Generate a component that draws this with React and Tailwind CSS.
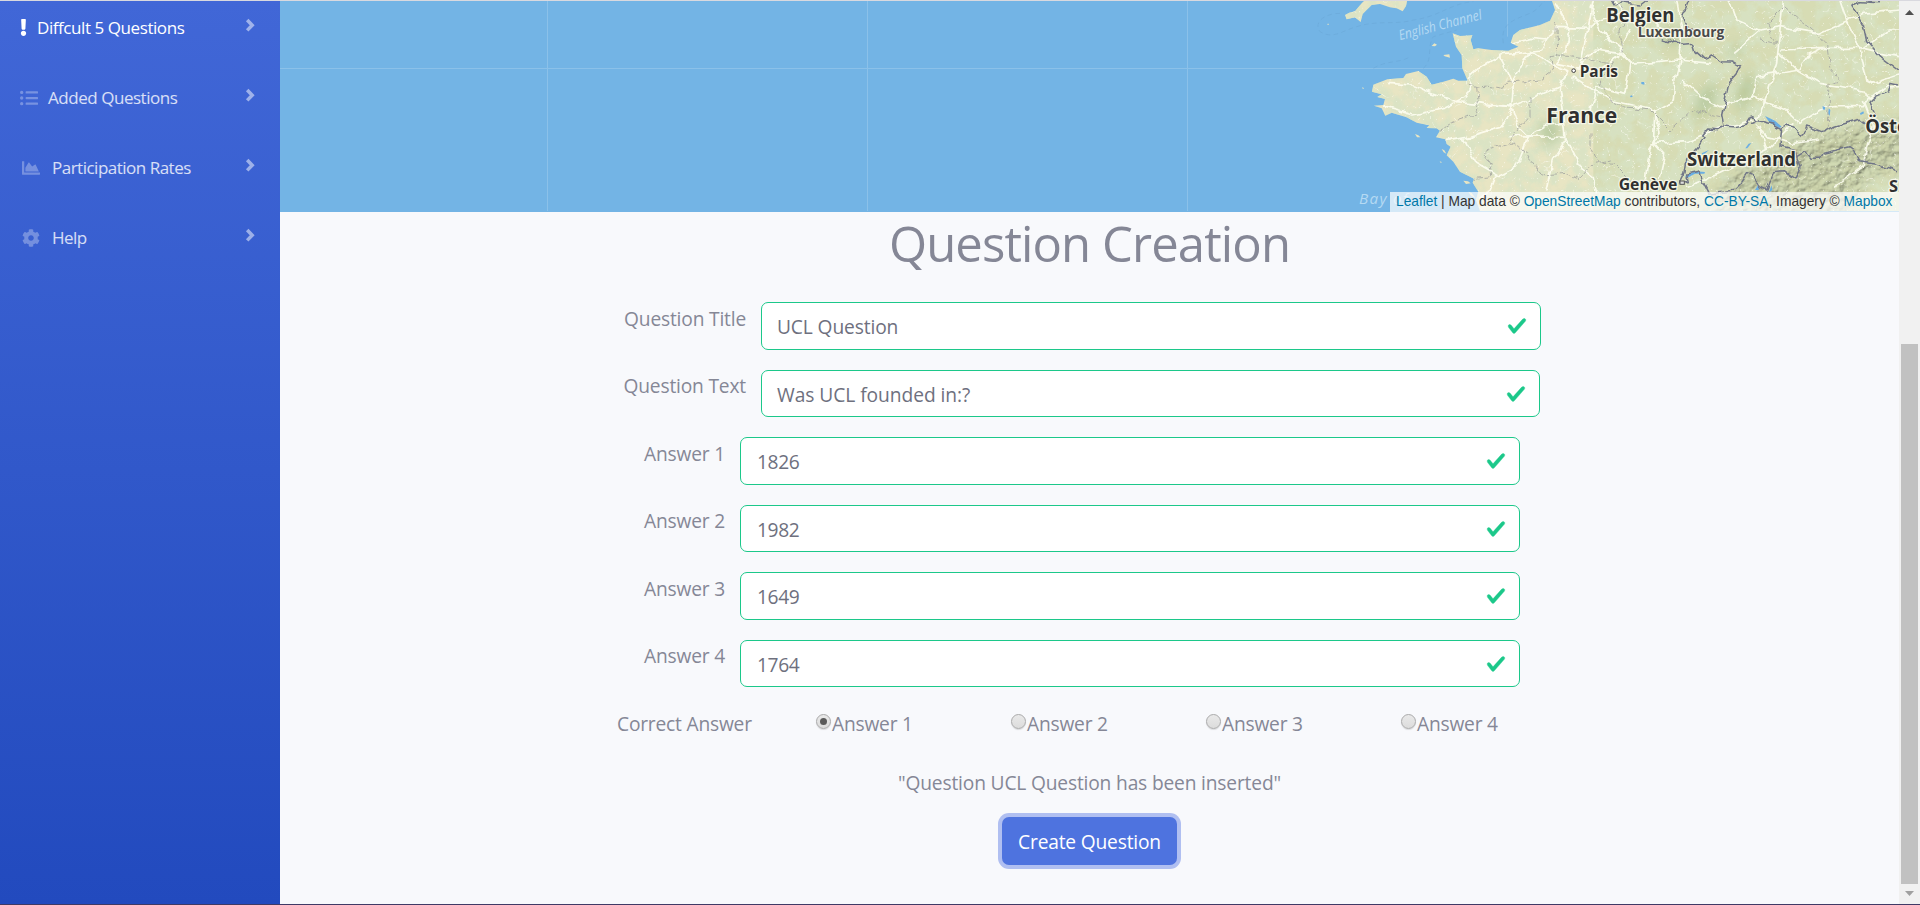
import React from 'react';
import { FaExclamation, FaListUl, FaChartArea, FaCog } from 'react-icons/fa';

const NAV = [
  { label: 'Diffcult 5 Questions', Icon: FaExclamation, icon: 'text-white text-[17px] w-[7px]', text: 'text-white ml-[10px] tracking-[-0.43px]' },
  { label: 'Added Questions', Icon: FaListUl, icon: 'text-white/30 text-[18px] w-[18px]', text: 'text-white/80 ml-[10px] tracking-[-0.46px]' },
  { label: 'Participation Rates', Icon: FaChartArea, icon: 'text-white/30 text-[18px] w-[18px] ml-[2px]', text: 'text-white/80 ml-[12px] tracking-[-0.5px]' },
  { label: 'Help', Icon: FaCog, icon: 'text-white/30 text-[18px] w-[18px] ml-[2px]', text: 'text-white/80 ml-[12px] tracking-[-0.5px]' },
];

function Sidebar() {
  return (
    <nav className="w-[280px] shrink-0 bg-gradient-to-b from-[#4167d7] to-[#224abe]">
      {NAV.map(({ label, Icon, icon, text }) => (
        <a key={label} className="flex h-[70px] items-start pl-[20px] pr-[24px]">
          <Icon className={`mt-[18px] shrink-0 ${icon}`} />
          <span className={`mt-[14px] flex-1 whitespace-nowrap text-[17px] leading-[26px] ${text}`}>{label}</span>
          <svg viewBox="0 0 12 14" className="mt-[17px] h-[14px] w-[12px] shrink-0">
            <path d="M3.2 2L8.2 7.2 3.2 12.4" fill="none" stroke="white" strokeOpacity="0.5" strokeWidth="3.5" />
          </svg>
        </a>
      ))}
    </nav>
  );
}

const LAND =
  'M755 0L765 30 750 62 720 75 660 90 640 105 632 128 655 140 625 152 575 150 535 145 520 148 512 120 517 106 480 108 458 100 468 140 485 165 487 205 503 242 475 242 460 236 430 245 395 254 380 230 355 213 318 222 310 234 262 238 220 254 216 275 245 283 232 291 255 297 250 315 222 317 245 325 256 347 275 338 320 352 350 368 388 376 380 384 410 385 420 392 408 412 436 418 440 432 452 440 440 466 460 485 480 515 522 536 518 548 535 575 528 600 540 633 1797 633 1797 0Z';
const ENGLAND = 'M135 45L148 38 165 34 185 10 195 0 322 0 318 18 308 34 290 25 270 22 240 12 215 15 188 42 182 66 165 52 140 58Z';

const ROADS = [
  'M634 130L690 115 740 120 775 82 860 85 900 60 960 40',
  'M740 120L725 150 650 160 600 165 530 210 505 235 515 260 500 290 470 305',
  'M690 150L740 185 800 215 780 260 700 295 640 320 560 315 535 310 470 305 400 280 340 255 262 250',
  'M595 160L640 250 635 320 655 380 683 408 670 450 650 500 590 530 575 570 540 600',
  'M640 320L600 382 500 412 435 425',
  'M635 320L560 312',
  'M490 415L530 490 600 530',
  'M683 408L740 375 790 370',
  'M625 410L798 412 790 330 780 265 800 215',
  'M798 420L760 480 740 575',
  'M798 415L840 500 880 530 890 580',
  'M470 305L430 325 340 345 250 320',
  'M690 150L655 215 635 250',
  'M820 230L880 270 930 300 1060 330 1080 400 1050 440 1030 580',
  'M765 10L810 85 800 150 770 190 840 205 850 150 865 80 880 0',
  'M830 210L880 150 960 160 990 190 1060 185 1140 180 1230 190',
  'M840 215L900 210 960 165 970 150 900 90 870 20',
  'M870 330L890 260 975 280 990 190 960 150 990 90',
  'M1065 330L1060 430 1095 470 1080 540',
  'M1060 335L1120 300 1125 240 1140 180 1145 90 1130 0',
  'M1145 240L1200 290 1260 320 1360 290',
  'M1060 430L1160 425 1240 390 1280 380 1360 360',
  'M940 0L990 60 1050 50 1140 130',
  'M1365 370L1400 290 1430 190 1440 90 1450 0',
  'M1435 160L1490 210 1560 250 1690 270 1710 300 1760 260 1797 260',
  'M1460 330L1360 290 1370 230 1500 210 1520 170 1580 140',
  'M1440 150L1580 145 1680 145 1740 160 1797 170',
  'M1680 145L1640 60 1620 0',
  'M1680 145L1700 240 1720 250 1810 220',
  'M1690 145L1770 90 1797 90',
  'M1460 330L1500 370 1560 330 1600 320 1690 320 1710 290',
  'M1300 160L1380 90 1440 80 1560 100 1690 40 1797 30',
  'M1290 0L1310 60 1380 90',
  'M1365 375L1400 410 1480 430 1560 420',
  'M1380 380L1400 450 1340 480 1260 520 1160 560',
  'M1690 300L1720 380 1700 440 1690 500 1600 560',
  'M1480 370L1440 410 1400 450',
];
const REGIONS = [
  'M503 255L530 262 560 258 610 265 620 250 720 240 760 210 750 170 775 165 820 172 890 180 940 190',
  'M530 262L535 310 525 345 450 370 415 392',
  'M690 290L690 350 660 380 625 430 670 450 690 480 725 525 800 520 840 535 880 490 930 480',
  'M625 430L550 455 570 490 575 530 520 535',
  'M770 165L768 80 760 60',
  'M870 400L870 440 890 485 940 490 990 540 1050 590',
  'M940 190L900 250 930 300 970 320 1050 330 1110 390 1180 330 1260 350',
  'M970 160L960 90 985 60 960 20',
  'M1380 120L1430 130 1400 70 1450 20 1500 60 1540 90 1580 130 1590 210 1615 240 1590 250 1585 380',
];
const BORDERS = [
  'M1085 122L1105 128 1125 120 1150 133 1180 130 1188 155 1210 175 1235 165 1265 185 1300 186 1322 198 1305 225 1288 245 1275 300 1265 345 1272 378 1300 380 1340 372 1350 355 1365 350 1368 362 1355 370 1375 362 1420 372 1445 385 1460 375 1480 385 1500 412 1512 400 1520 378 1565 395 1610 378 1680 358 1700 375 1728 345 1710 310 1730 290 1765 275 1773 250 1797 255',
  'M1272 378L1250 392 1220 390 1208 405 1215 412 1190 445 1160 480 1155 515 1140 545 1165 545 1160 525 1200 515 1210 550 1225 580',
  'M1445 385L1440 440 1480 450 1490 470 1515 455 1530 475 1560 475 1570 460 1650 440 1665 450 1680 485 1740 495 1797 512',
  'M1490 470L1500 500 1485 540 1450 515 1420 518 1400 570 1380 560 1360 530 1340 520 1320 550 1300 570 1225 580',
  'M1655 18L1670 40 1690 75 1700 125 1740 170 1797 213',
  'M1655 18L1680 5 1740 8',
  'M1170 0L1160 25 1145 40 1155 75 1180 95',
  'M935 0L945 18 960 8 1020 15 1040 0',
];

const LABELS = [
  { t: 'Belgien', x: 919, y: 65, w: 204, s: 57 },
  { t: 'Luxembourg', x: 1013, y: 110, w: 260, s: 44, c: '#4a4a4a' },
  { t: 'Paris', x: 839, y: 231, w: 115, s: 50 },
  { t: 'France', x: 739, y: 368, w: 213, s: 65 },
  { t: 'Switzerland', x: 1161, y: 497, w: 327, s: 56 },
  { t: 'Genève', x: 956, y: 570, w: 176, s: 50 },
  { t: 'Öste', x: 1696, y: 399, w: 128, s: 58 },
  { t: 'S', x: 1767, y: 577, w: 27, s: 48 },
];

function MapArt() {
  return (
    <svg className="block h-[210px] w-[1619px]" viewBox="-3060 3 4857 630" preserveAspectRatio="none" aria-hidden="true">
      <defs>
        <clipPath id="land"><path d={LAND} /><path d={ENGLAND} /></clipPath>
        <filter id="terrain" x="0" y="0" width="100%" height="100%">
          <feTurbulence type="fractalNoise" baseFrequency="0.022" numOctaves="4" seed="4" />
          <feColorMatrix values="0 0 0 0 0.68  0 0 0 0 0.77  0 0 0 0 0.56  3.6 0 0 0 -1.3" />
        </filter>
        <filter id="lanes" x="0" y="0" width="100%" height="100%">
          <feTurbulence type="turbulence" baseFrequency="0.028" numOctaves="2" seed="9" />
          <feColorMatrix values="0 0 0 0 1  0 0 0 0 1  0 0 0 0 0.93  -14 0 0 0 1" />
        </filter>
        <filter id="relief" x="0" y="0" width="100%" height="100%">
          <feTurbulence type="fractalNoise" baseFrequency="0.04 0.05" numOctaves="4" seed="2" result="n" />
          <feColorMatrix in="n" values="1 0 0 0 0  0 1 0 0 0  0 0 1 0 0  1 0 0 0 0" result="h" />
          <feDiffuseLighting in="h" surfaceScale="9" lightingColor="#d0d8ae"><feDistantLight azimuth="225" elevation="50" /></feDiffuseLighting>
        </filter>
        <filter id="soft" x="-30%" y="-30%" width="160%" height="160%"><feGaussianBlur stdDeviation="18" /></filter>
        <filter id="rough" x="-5%" y="-5%" width="110%" height="110%">
          <feTurbulence type="fractalNoise" baseFrequency="0.03" numOctaves="2" seed="7" />
          <feDisplacementMap in="SourceGraphic" scale="22" xChannelSelector="R" yChannelSelector="G" />
        </filter>
        <mask id="alps"><path d="M1210 650L1300 520 1400 480 1500 410 1600 400 1720 370 1830 360 1830 500 1700 530 1640 650Z" fill="white" filter="url(#soft)" /></mask>
      </defs>
      <rect x="-3060" width="4857" height="633" fill="#73b4e5" />
      <g stroke="#9bcaec" strokeWidth="3" opacity="0.6">
        <path d="M-3060 205.5H620M-2257.5 0V633M-1297.5 0V633M-337.5 0V633M622.5 0V110" />
      </g>
      <g fill="none" stroke="#68a5d3" strokeWidth="2" strokeDasharray="14 10" opacity="0.7">
        <path d="M120 40C70 40 40 70 60 95C100 120 130 90 170 80C230 60 290 75 340 60C420 50 450 10 520 5" />
        <path d="M610 130C600 70 640 60 690 40C730 20 720 5 740 0M370 205C400 180 380 140 400 110L470 90M220 205C260 180 300 190 330 170" />
      </g>
      <path d={LAND} fill="#e8e5c3" />
      <path d={ENGLAND} fill="#e8e5c3" />
      <path d="M395 138l8-8 8 4-6 5zM430 165l18-2 2 10-16-4zM345 402l10 4 6 6-10 0zM490 542l14 2 8 6-14 2zM425 447l8 4 6 10-8-4zM505 575l10 4 12 16-14-8zM419 484l6 2-2 4zM84 70l3 4-5 1zM186 262l6 2-3 4z" fill="#e8e5c3" />
      <g clipPath="url(#land)">
        <rect x="880" width="920" height="633" fill="#c6d4a6" opacity="0.5" />
        <rect x="130" width="1670" height="633" filter="url(#terrain)" opacity="0.8" />
        <g fill="#a3b987" opacity="0.6" filter="url(#soft)">
          <path d="M1310 280L1350 210 1365 260 1320 350ZM1200 280L1250 240 1240 320 1180 370ZM1280 170L1310 130 1330 160ZM720 370L780 360 780 410 730 440ZM1080 90h70v40h-60z" />
        </g>
        <rect x="1180" y="340" width="620" height="293" filter="url(#relief)" mask="url(#alps)" opacity="0.65" />
        <rect x="130" width="1670" height="633" filter="url(#lanes)" opacity="0.5" />
        <g fill="none" stroke="#fffff4" strokeWidth="5" strokeLinejoin="round" opacity="0.85" filter="url(#rough)">
          {ROADS.map((d) => <path key={d} d={d} />)}
        </g>
        <g fill="none" stroke="#a3a5a0" strokeWidth="2.5" strokeDasharray="16 5" filter="url(#rough)">
          {REGIONS.map((d) => <path key={d} d={d} />)}
        </g>
        <path fill="#6aaee3" d="M1155 528l30-14 30 2-2 5-28 0-25 14zM1395 348l30 14 20 18-6 4-30-16zM1568 318l8 4-2 8-6-2zM1586 325l5 5-2 18-4-8zM1680 340l10-6 2 6-10 5zM1205 460l22-10-18 16zM1336 445l10-14 8-2-12 16zM1024 246l9 0 0 8-9-2zM990 288l6-2 2 5-6 1zM1365 570l10-16 2 16zM1405 580l10-24 2 14z" />
        <g fill="none" stroke="#707587" strokeWidth="4.5" strokeLinejoin="round" filter="url(#rough)">
          {BORDERS.map((d) => <path key={d} d={d} />)}
        </g>
      </g>
      <g fontFamily="'Open Sans','Noto Sans',sans-serif">
        <g fill="#b5daf3" fontStyle="italic">
          <text x="300" y="121" fontSize="42" textLength="256" lengthAdjust="spacingAndGlyphs" transform="rotate(-14.5 300 121)">English Channel</text>
          <text x="177" y="613" fontSize="46" textLength="146">Bay of</text>
        </g>
        <g fontWeight="700" stroke="#fbfbf0" strokeOpacity="0.85" strokeWidth="8" strokeLinejoin="round" paintOrder="stroke">
          {LABELS.map((l) => (
            <text key={l.t} x={l.x} y={l.y} fontSize={l.s} textLength={l.w} lengthAdjust="spacingAndGlyphs" fill={l.c || '#303030'}>{l.t}</text>
          ))}
        </g>
      </g>
      <circle cx="821" cy="212" r="5.5" fill="#fff" stroke="#444" strokeWidth="3" />
      <rect x="1140" y="543" width="13" height="10" fill="#ddd" stroke="#555" strokeWidth="3" />
    </svg>
  );
}

function MapPanel() {
  return (
    <div className="relative h-[211px] shrink-0 overflow-hidden bg-[#73b4e5]">
      <MapArt />
      <div className="absolute bottom-0 right-0 h-[20px] w-[509px] whitespace-nowrap bg-white/70 pl-[6px] font-['Liberation_Sans',sans-serif] text-[13.75px] leading-[19px] text-[#333]">
        <a className="text-[#0078a8]">Leaflet</a> | Map data © <a className="text-[#0078a8]">OpenStreetMap</a> contributors, <a className="text-[#0078a8]">CC-BY-SA</a>, Imagery © <a className="text-[#0078a8]">Mapbox</a>
      </div>
    </div>
  );
}

const FIELDS = [
  { label: 'Question Title', value: 'UCL Question', col: 'w-[466px]', box: 'w-[780px] pl-[15px]', vt: 'tracking-[-0.12px]' },
  { label: 'Question Text', value: 'Was UCL founded in:?', col: 'w-[466px]', box: 'w-[779px] pl-[15px]', vt: 'tracking-[-0.05px]' },
  { label: 'Answer 1', value: '1826', col: 'w-[445px]', box: 'w-[780px] pl-[16px]', vt: 'tracking-[-0.4px]' },
  { label: 'Answer 2', value: '1982', col: 'w-[445px]', box: 'w-[780px] pl-[16px]', vt: 'tracking-[-0.4px]' },
  { label: 'Answer 3', value: '1649', col: 'w-[445px]', box: 'w-[780px] pl-[16px]', vt: 'tracking-[-0.4px]' },
  { label: 'Answer 4', value: '1764', col: 'w-[445px]', box: 'w-[780px] pl-[16px]', vt: 'tracking-[-0.4px]' },
];

function Field({ label, value, col, box, vt }) {
  return (
    <div className="flex h-[47.5px] items-start gap-[15px]">
      <label className={`shrink-0 whitespace-nowrap pt-[2.6px] text-right text-[19.2px] leading-[28px] tracking-[-0.18px] ${col}`}>{label}</label>
      <div className={`flex h-[47.5px] shrink-0 items-center justify-between rounded-[7px] border border-[#1cc88a] bg-white pr-[13px] ${box}`}>
        <span className={`whitespace-nowrap pt-[2px] text-[19.2px] leading-[28px] text-[#6e707e] ${vt}`}>{value}</span>
        <svg viewBox="0 0 8 8" className="h-[20px] w-[20px]">
          <path fill="#1cc88a" stroke="#1cc88a" strokeWidth="0.15" d="M2.3 6.73L.6 4.53c-.4-1.04.46-1.4 1.1-.8l1.1 1.4 3.4-3.8c.6-.63 1.6-.27 1.2.7l-4 4.6c-.43.5-.8.4-1.1.1z" />
        </svg>
      </div>
    </div>
  );
}

function Radio({ on }) {
  return (
    <span className="mt-[4px] flex h-[15px] w-[15px] shrink-0 items-center justify-center rounded-full border border-[#aaaaaa] bg-gradient-to-b from-[#e9e9e9] to-[#dcdcdc] shadow-[0_1px_1px_rgba(0,0,0,0.12)]">
      {on && <span className="h-[7px] w-[7px] rounded-full bg-[#5a5a5a]" />}
    </span>
  );
}

function Scrollbar() {
  return (
    <div className="flex w-[21px] shrink-0 flex-col items-center bg-[#f1f1f1]">
      <svg className="h-[21px] w-[21px] shrink-0" viewBox="0 0 21 21"><path d="M6 14L10.5 9 15 14Z" fill="#505050" /></svg>
      <div className="mt-[322px] h-[540px] w-[17px] bg-[#c1c1c1]" />
      <svg className="h-[20px] w-[21px] shrink-0" viewBox="0 0 21 20"><path d="M6 7L10.5 12 15 7Z" fill="#a0a0a0" /></svg>
    </div>
  );
}

export default function App() {
  return (
    <div className="flex h-[905px] w-[1920px] flex-col overflow-hidden bg-[#f8f9fc] font-['Open_Sans','Noto_Sans',sans-serif] text-[#858796]">
      <div className="h-px shrink-0 bg-[#d9d9df]" />
      <div className="flex h-[903px] shrink-0">
        <Sidebar />
        <main className="flex w-[1619px] shrink-0 flex-col">
          <MapPanel />
          <h1 className="mt-[1px] h-[60px] text-center text-[49px] leading-[60px] tracking-[-0.88px]">Question Creation</h1>
          <form className="mt-[29.4px] flex flex-col gap-[20px]">
            {FIELDS.map((f) => <Field key={f.label} {...f} />)}
          </form>
          <div className="mt-[22.6px] flex h-[28px] items-start pl-[337px] text-[19.2px] leading-[28px] tracking-[-0.2px]">
            <span className="w-[199px] shrink-0 whitespace-nowrap">Correct Answer</span>
            {[1, 2, 3, 4].map((n) => (
              <label key={n} className="flex w-[195px] shrink-0 items-start gap-[1px] whitespace-nowrap">
                <Radio on={n === 1} />
                {`Answer ${n}`}
              </label>
            ))}
          </div>
          <p className="mt-[31.4px] text-center text-[19.2px] leading-[28px] tracking-[-0.17px]">"Question UCL Question has been inserted"</p>
          <button className="mt-[20px] h-[48px] w-[175px] self-center whitespace-nowrap rounded-[7px] bg-[#4e73df] pt-[1px] text-[19.2px] leading-[28px] tracking-[-0.18px] text-white shadow-[0_0_0_4px_#b0bff1]">Create Question</button>
        </main>
        <Scrollbar />
      </div>
      <div className="h-px shrink-0 bg-[#3f3a66]" />
    </div>
  );
}
